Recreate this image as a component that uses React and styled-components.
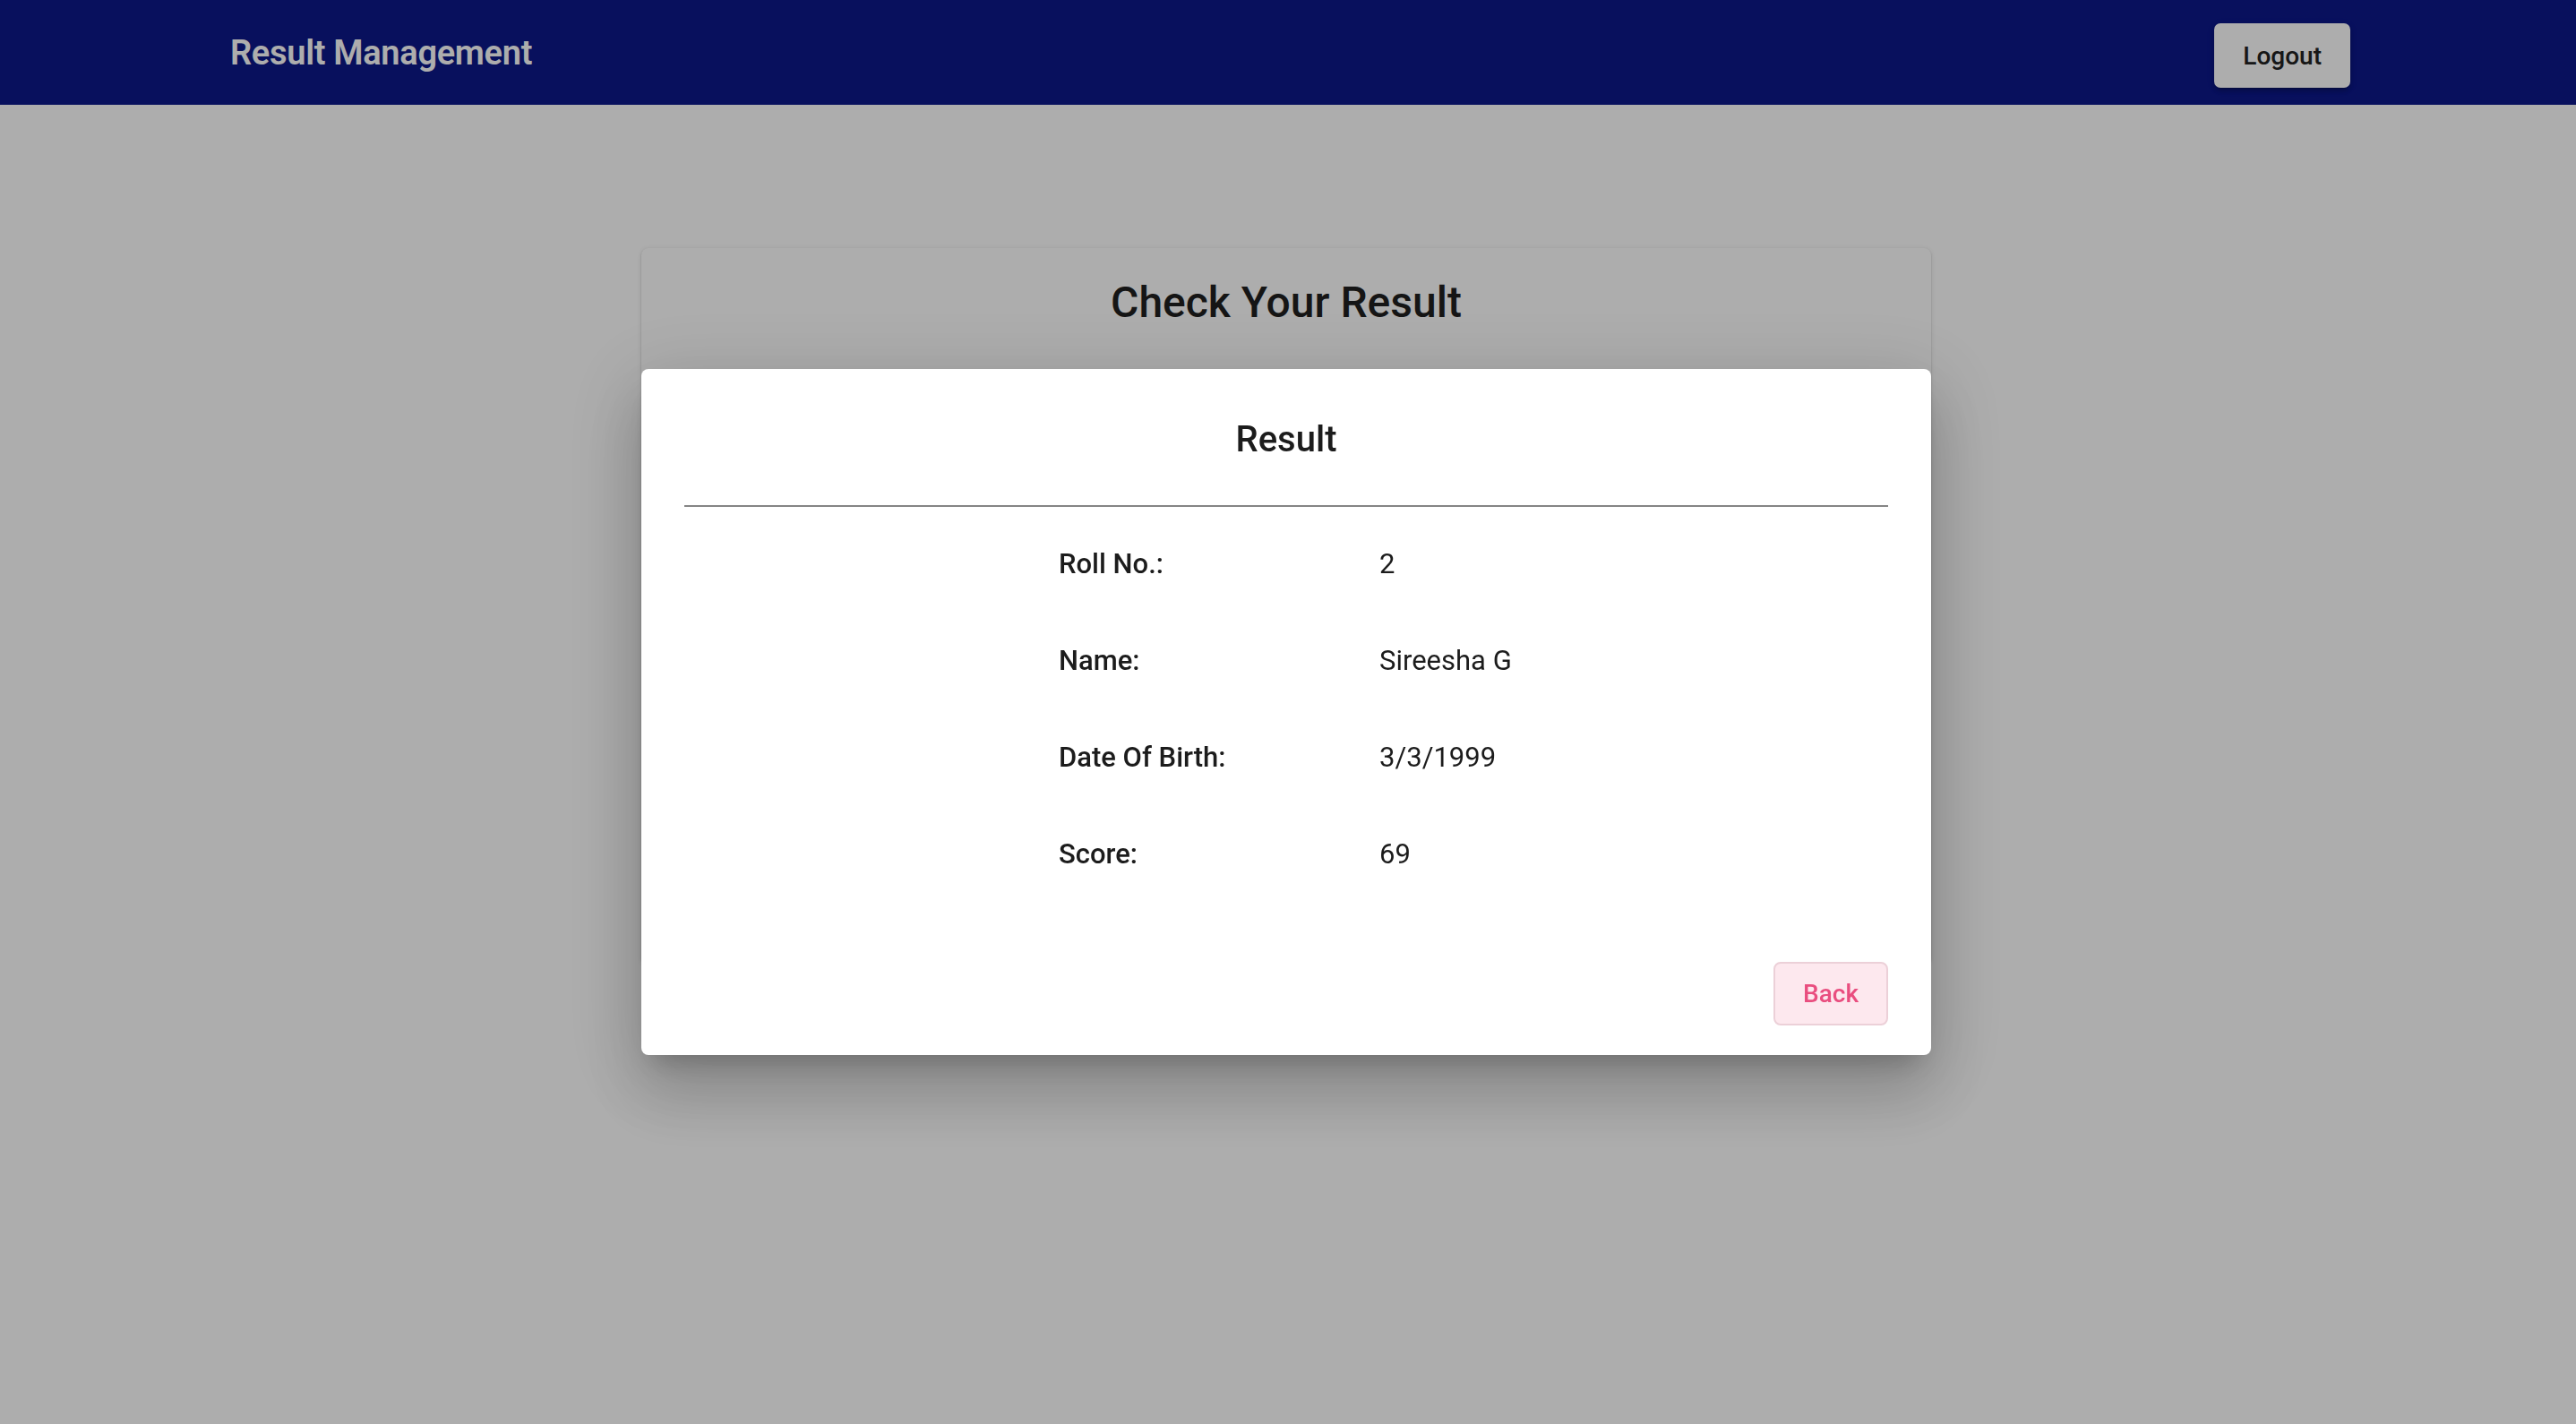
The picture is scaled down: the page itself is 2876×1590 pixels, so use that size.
import React from 'react';
import styled, { createGlobalStyle } from 'styled-components';

const GlobalStyle = createGlobalStyle`
  html, body {
    margin: 0;
    padding: 0;
    background: #ffffff;
    font-family: Roboto, 'Noto Sans', Arial, sans-serif;
  }
  * {
    box-sizing: border-box;
  }
`;

const Page = styled.div`
  min-height: 100vh;
  background: #ffffff;
`;

const TopBar = styled.header`
  height: 117px;
  background: #0c188a;
  display: flex;
  align-items: center;
  justify-content: space-between;
  padding: 0 252px 0 257px;
`;

const Brand = styled.span`
  color: #ffffff;
  font-size: 38px;
  font-weight: 600;
  letter-spacing: -0.3px;
`;

const LogoutBtn = styled.button`
  height: 72px;
  margin-top: 7px;
  padding: 0 32px;
  border: 0;
  border-radius: 7px;
  background: #ffffff;
  color: #222222;
  font-family: inherit;
  font-size: 28px;
  font-weight: 500;
  box-shadow: 0 5px 2px -4px rgba(0, 0, 0, 0.2), 0 4px 4px 0 rgba(0, 0, 0, 0.14), 0 2px 9px 0 rgba(0, 0, 0, 0.12);
  cursor: pointer;
`;

const Main = styled.main`
  display: flex;
  justify-content: center;
  padding: 160px 4px 0 0;
`;

const Card = styled.section`
  width: 1440px;
  height: 800px;
  background: #ffffff;
  border-radius: 8px;
  padding: 32px 48px;
  box-shadow: 0 2px 2px -1px rgba(0, 0, 0, 0.2), 0 1px 2px 0 rgba(0, 0, 0, 0.14), 0 1px 5px 0 rgba(0, 0, 0, 0.12);
  display: flex;
  flex-direction: column;
  align-items: center;
`;

const CardTitle = styled.h1`
  margin: 0;
  font-size: 48px;
  line-height: 1.2;
  font-weight: 500;
  color: #1f1f1f;
`;

const Backdrop = styled.div`
  position: fixed;
  inset: 0;
  padding-right: 4px;
  background: rgba(0, 0, 0, 0.32);
  display: flex;
  align-items: center;
  justify-content: center;
`;

const Dialog = styled.div`
  width: 1440px;
  background: #ffffff;
  border-radius: 8px;
  padding: 55px 48px 33px;
  box-shadow: 0 20px 27px -13px rgba(0, 0, 0, 0.2), 0 44px 70px 5px rgba(0, 0, 0, 0.14), 0 16px 84px 15px rgba(0, 0, 0, 0.12);
  display: flex;
  flex-direction: column;
`;

const DialogTitle = styled.h2`
  margin: 0;
  text-align: center;
  font-size: 40px;
  line-height: 48px;
  font-weight: 500;
  color: #1c1c1c;
`;

const Divider = styled.hr`
  margin: 49px 0 0;
  border: 0;
  border-top: 2px solid #858585;
`;

const Details = styled.dl`
  margin: 41px 0 0;
  padding-left: 418px;
  display: grid;
  grid-template-columns: 358px auto;
  row-gap: 62px;
  font-size: 31px;
  line-height: 46px;
  color: #1c1c1c;
`;

const Label = styled.dt`
  margin: 0;
  font-weight: 500;
`;

const Value = styled.dd`
  margin: 0;
  font-weight: 400;
`;

const Actions = styled.div`
  margin-top: 97px;
  display: flex;
  justify-content: flex-end;
`;

const BackBtn = styled.button`
  width: 128px;
  height: 71px;
  border: 2px solid #ecd0d8;
  border-radius: 8px;
  background: #fde8ee;
  color: #e94e7f;
  font-family: inherit;
  font-size: 28px;
  font-weight: 500;
  cursor: pointer;
`;

const result = [
  { label: 'Roll No.:', value: '2' },
  { label: 'Name:', value: 'Sireesha G' },
  { label: 'Date Of Birth:', value: '3/3/1999' },
  { label: 'Score:', value: '69' },
];

export default function App() {
  return (
    <>
      <GlobalStyle />
      <Page>
        <TopBar>
          <Brand>Result Management</Brand>
          <LogoutBtn>Logout</LogoutBtn>
        </TopBar>
        <Main>
          <Card>
            <CardTitle>Check Your Result</CardTitle>
          </Card>
        </Main>
      </Page>
      <Backdrop>
        <Dialog>
          <DialogTitle>Result</DialogTitle>
          <Divider />
          <Details>
            {result.map(row => (
              <React.Fragment key={row.label}>
                <Label>{row.label}</Label>
                <Value>{row.value}</Value>
              </React.Fragment>
            ))}
          </Details>
          <Actions>
            <BackBtn>Back</BackBtn>
          </Actions>
        </Dialog>
      </Backdrop>
    </>
  );
}
